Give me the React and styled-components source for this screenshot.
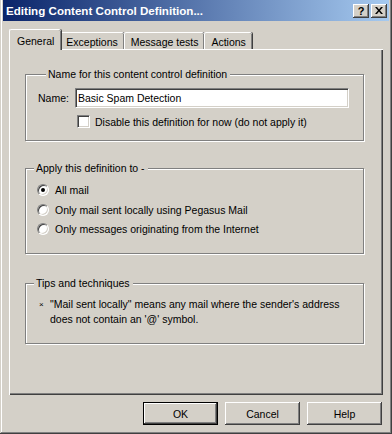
import styled, { createGlobalStyle } from "styled-components";

// --------------------------------------------------

const face = "#D4D0C8";
const shadow = "#808080";
const darkShadow = "#404040";

const GlobalStyle = createGlobalStyle`
	html, body {
		margin: 0;
		padding: 0;
		background: ${face};
	}
	body {
		font-family: "Liberation Sans", Arial, sans-serif;
		font-size: 10.5px;
		color: #000;
	}
`;

const raised = `
	box-shadow:
		inset -1px -1px ${darkShadow},
		inset 1px 1px #fff,
		inset -2px -2px ${shadow},
		inset 2px 2px ${face};
`;

const sunken = `
	border: 1px solid;
	border-color: ${shadow} #fff #fff ${shadow};
	box-shadow: inset 1px 1px ${darkShadow}, inset -1px -1px ${face};
`;

const Window = styled.div`
	box-sizing: border-box;
	width: 392px;
	height: 434px;
	background: ${face};
	display: flex;
	flex-direction: column;
	padding: 0 3px 3px 3px;
	box-shadow:
		inset -1px -1px ${darkShadow},
		inset 1px 0 ${face},
		inset -2px -2px ${shadow},
		inset 2px 0 #fff;
`;

const TitleBar = styled.div`
	height: 21px;
	display: flex;
	align-items: center;
	padding: 0 2px 0 2px;
	background: linear-gradient(to right, #0a246a, #a6caf0);
`;

const Title = styled.span`
	flex: 1;
	color: #fff;
	font-weight: bold;
	font-size: 11.6px;
	padding-left: 1px;
	white-space: nowrap;
`;

const TitleButton = styled.button`
	width: 16px;
	height: 14px;
	padding: 0;
	margin-left: ${p => p.gap || 0}px;
	border: none;
	background: ${face};
	${raised}
	display: flex;
	align-items: center;
	justify-content: center;
	font-family: "Liberation Sans", Arial, sans-serif;
	font-weight: bold;
	font-size: 11px;
	color: #000;
`;

const Body = styled.div`
	flex: 1;
	display: flex;
	flex-direction: column;
	padding: 8px 6px 0 6px;
`;

const TabStrip = styled.div`
	display: flex;
	align-items: flex-end;
	height: 20px;
	padding-left: 2px;
	position: relative;
	z-index: 1;
`;

const Tab = styled.div`
	box-sizing: border-box;
	height: ${p => p.active ? 21 : 17}px;
	margin: ${p => p.active ? "0 -2px -1px -2px" : "0"};
	padding: ${p => p.active ? "2px 7px 0 7px" : "1px 6px 0 6px"};
	background: ${face};
	border-top: 1px solid #fff;
	border-left: 1px solid #fff;
	border-top-left-radius: 2px;
	border-top-right-radius: 2px;
	box-shadow: inset -1px 0 ${shadow}, 1px 0 ${darkShadow};
	display: flex;
	align-items: center;
	white-space: nowrap;
	position: relative;
	z-index: ${p => p.active ? 2 : 1};
`;

const Panel = styled.div`
	box-sizing: border-box;
	height: 346px;
	border-top: 1px solid #fff;
	border-left: 1px solid #fff;
	box-shadow: inset -1px -1px ${darkShadow}, inset -2px -2px ${shadow};
	padding: 18px 19px 0 15px;
	display: flex;
	flex-direction: column;
`;

const Group = styled.fieldset`
	margin: 0;
	margin-bottom: ${p => p.after || 0}px;
	padding: ${p => p.pad || "0"};
	border: 1px solid ${shadow};
	box-shadow: inset 1px 1px #fff, 1px 1px #fff;
	height: ${p => p.h}px;
	box-sizing: border-box;
	min-width: 0;
`;

const Legend = styled.legend`
	padding: 0 3px 0 2px;
	margin-left: 8px;
	background: ${face};
	line-height: 13px;
`;

const FieldRow = styled.div`
	display: flex;
	align-items: center;
	height: 13px;
	padding-left: ${p => p.indent || 0}px;
	margin-top: ${p => p.top || 0}px;
	gap: ${p => p.gap || 0}px;
`;

const Label = styled.label`
	white-space: nowrap;
	width: ${p => p.w ? `${p.w}px` : "auto"};
	flex-shrink: 0;
`;

const NameRow = styled.div`
	display: flex;
	align-items: center;
	margin-top: 7px;
`;

const TextBox = styled.div`
	box-sizing: border-box;
	width: 274px;
	height: 20px;
	background: #fff;
	${sunken}
	display: flex;
	align-items: center;
	padding-left: 2px;
`;

const CheckBox = styled.span`
	box-sizing: border-box;
	width: 13px;
	height: 13px;
	background: #fff;
	${sunken}
	flex-shrink: 0;
`;

const Radio = styled.span`
	box-sizing: border-box;
	width: 12px;
	height: 12px;
	border-radius: 50%;
	background: #fff;
	${sunken}
	flex-shrink: 0;
	display: flex;
	align-items: center;
	justify-content: center;
	&::after {
		content: "";
		width: 4px;
		height: 4px;
		border-radius: 50%;
		background: ${p => p.checked ? "#000" : "transparent"};
	}
`;

const OptionList = styled.div`
	display: flex;
	flex-direction: column;
	gap: 6.5px;
	padding: 8.5px 0 0 11px;
`;

const Tip = styled.div`
	display: flex;
	padding: 7px 0 0 13px;
	line-height: 15px;
`;

const Bullet = styled.span`
	width: 11px;
	font-size: 8px;
	flex-shrink: 0;
`;

const ButtonRow = styled.div`
	display: flex;
	justify-content: flex-end;
	gap: 7px;
	margin-top: 7px;
	padding-right: 1px;
`;

const Button = styled.button`
	box-sizing: border-box;
	width: 75px;
	height: 23px;
	padding: 0;
	background: ${face};
	font-family: "Liberation Sans", Arial, sans-serif;
	font-size: 10.5px;
	color: #000;
	border: ${p => p.primary ? "1px solid #000" : "none"};
	${raised}
`;

const tabs = ["General", "Exceptions", "Message tests", "Actions"];

const options = [
	{ label: "All mail", checked: true },
	{ label: "Only mail sent locally using Pegasus Mail" },
	{ label: "Only messages originating from the Internet" },
];

export default function App() {
	return (
		<>
			<GlobalStyle />
			<Window>
				<TitleBar>
					<Title>Editing Content Control Definition...</Title>
					<TitleButton>?</TitleButton>
					<TitleButton gap={2}>
						<svg width="8" height="7" viewBox="0 0 8 7">
							<path d="M0 0h2l2 2.5L6 0h2L5 3.5 8 7H6L4 4.5 2 7H0l3-3.5z" fill="#000" />
						</svg>
					</TitleButton>
				</TitleBar>
				<Body>
					<TabStrip>
						{tabs.map((t, i) => (
							<Tab key={t} active={i === 0}>{t}</Tab>
						))}
					</TabStrip>
					<Panel>
						<Group h={73} after={21} pad="0 0 0 12px">
							<Legend>Name for this content control definition</Legend>
							<NameRow>
								<Label w={37}>Name:</Label>
								<TextBox>Basic Spam Detection</TextBox>
							</NameRow>
							<FieldRow top={7} indent={39} gap={5}>
								<CheckBox />
								<Label>Disable this definition for now (do not apply it)</Label>
							</FieldRow>
						</Group>
						<Group h={92} after={23}>
							<Legend>Apply this definition to -</Legend>
							<OptionList>
								{options.map(o => (
									<FieldRow key={o.label} gap={6}>
										<Radio checked={o.checked} />
										<Label>{o.label}</Label>
									</FieldRow>
								))}
							</OptionList>
						</Group>
						<Group h={67}>
							<Legend>Tips and techniques</Legend>
							<Tip>
								<Bullet>×</Bullet>
								<span>
									"Mail sent locally" means any mail where the sender's address
									<br />
									does not contain an '@' symbol.
								</span>
							</Tip>
						</Group>
					</Panel>
					<ButtonRow>
						<Button primary>OK</Button>
						<Button>Cancel</Button>
						<Button>Help</Button>
					</ButtonRow>
				</Body>
			</Window>
		</>
	);
}
